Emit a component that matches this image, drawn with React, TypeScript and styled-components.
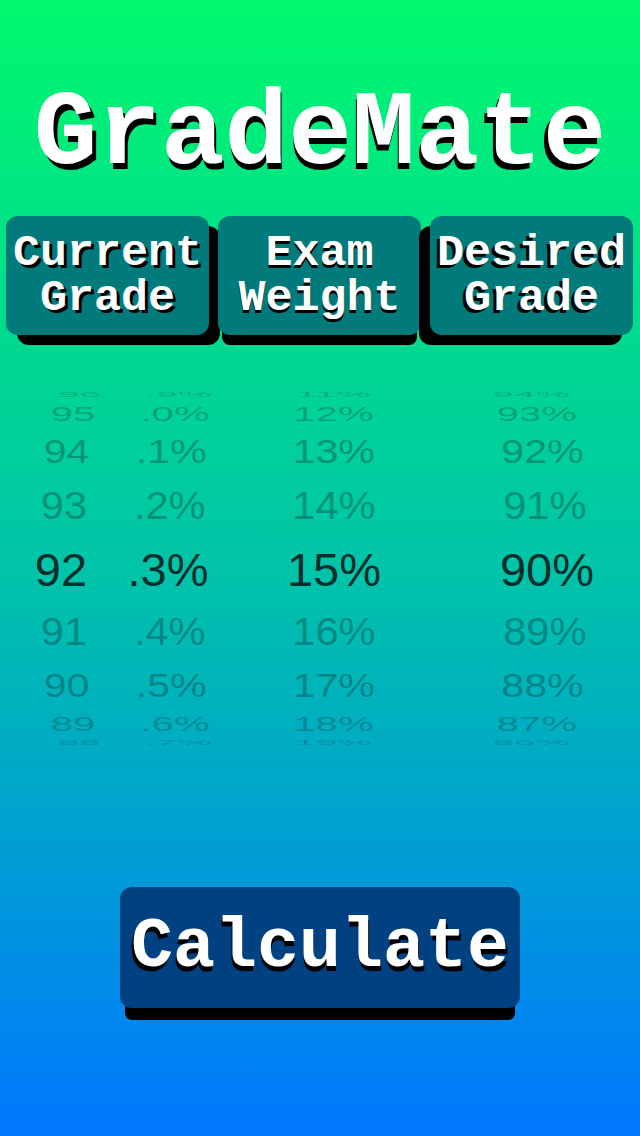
import React from "react";
import styled, { createGlobalStyle } from "styled-components";

const GlobalStyle = createGlobalStyle`
  html, body {
    margin: 0;
    padding: 0;
  }
  body {
    background: #00f56e;
  }
`;

const Page = styled.div`
  width: 640px;
  height: 1136px;
  overflow: hidden;
  display: flex;
  flex-direction: column;
  align-items: stretch;
  background: linear-gradient(to bottom, #00f86d 0%, #00c4a8 50%, #0077ff 100%);
  font-family: "Liberation Mono", "Courier New", monospace;
`;

const Title = styled.h1`
  margin: 82px 0 0;
  height: 106px;
  font-size: 106px;
  line-height: 1;
  font-weight: 700;
  color: #ffffff;
  text-align: center;
  white-space: nowrap;
`;

const TitleLetter = styled.span<{ $dx: number }>`
  text-shadow: ${(p) => p.$dx}px 6px 0 #000;
`;

const HeaderRow = styled.div`
  margin-top: 28px;
  display: flex;
  gap: 9px;
  padding: 0 7px 0 6px;
`;

const HeaderCard = styled.div<{ $shadow: string }>`
  width: 203px;
  height: 119px;
  border-radius: 12px;
  background: #007a7a;
  box-shadow: ${(p) => p.$shadow};
  display: flex;
  align-items: center;
  justify-content: center;
`;

const CardLabel = styled.div<{ $dx: number }>`
  font-size: 45px;
  line-height: 45px;
  font-weight: 700;
  color: #ffffff;
  text-align: center;
  text-shadow: ${(p) => p.$dx}px 3px 0 #000;
  white-space: nowrap;
`;

const Picker = styled.div`
  margin-top: 56px;
  display: flex;
  font-family: "Liberation Sans", Arial, sans-serif;
`;

const Wheel = styled.div<{ $w: number }>`
  width: ${(p) => p.$w}px;
  display: flex;
  flex-direction: column;
`;

const Row = styled.div<{ $h: number }>`
  height: ${(p) => p.$h}px;
  display: flex;
  align-items: center;
  justify-content: center;
  overflow: visible;
`;

const Cell = styled.span<{
  $size: number;
  $color: string;
  $dx: number;
  $sx: number;
  $sy: number;
}>`
  display: block;
  font-size: ${(p) => p.$size}px;
  line-height: 1;
  color: ${(p) => p.$color};
  white-space: nowrap;
  transform: translateX(${(p) => p.$dx}px) scale(${(p) => p.$sx}, ${(p) => p.$sy});
`;

const Spacer = styled.div`
  height: 140px;
`;

const CalcButton = styled.button`
  align-self: center;
  width: 400px;
  height: 121px;
  border: none;
  border-radius: 12px;
  background: #004182;
  box-shadow: 0 17px 0 -5px #000;
  font-family: "Liberation Mono", "Courier New", monospace;
  font-size: 70px;
  font-weight: 700;
  color: #ffffff;
  padding: 0;
  display: flex;
  align-items: center;
  justify-content: center;
`;

const CalcLetter = styled.span<{ $dx: number }>`
  text-shadow: ${(p) => p.$dx}px 5px 0 #000;
`;

// wheel geometry: distance d from selected row
const ROW_H = [64, 62, 46, 30, 8];
const K = [1, 0.99, 0.98, 0.955, 0.93];
const SY = [1, 0.92, 0.77, 0.5, 0.16];
const COLORS = [
  "rgba(5, 30, 32, 0.92)",
  "rgba(0, 40, 40, 0.36)",
  "rgba(0, 40, 40, 0.34)",
  "rgba(0, 40, 40, 0.28)",
  "rgba(0, 40, 40, 0.22)",
];

type Col = { w: number; center: number; values: string[] };

const columns: Col[] = [
  { w: 122, center: 61, values: ["96", "95", "94", "93", "92", "91", "90", "89", "88"] },
  { w: 92, center: 168, values: [".9%", ".0%", ".1%", ".2%", ".3%", ".4%", ".5%", ".6%", ".7%"] },
  { w: 240, center: 334, values: ["11%", "12%", "13%", "14%", "15%", "16%", "17%", "18%", "19%"] },
  { w: 186, center: 547, values: ["94%", "93%", "92%", "91%", "90%", "89%", "88%", "87%", "86%"] },
];

function WheelColumn({ col }: { col: Col }) {
  return (
    <Wheel $w={col.w}>
      {col.values.map((v, i) => {
        const d = Math.abs(i - 4);
        const dx = (320 - col.center) * (1 - K[d]);
        return (
          <Row key={i} $h={ROW_H[d]}>
            <Cell
              $size={d === 0 ? 47 : 42}
              $color={COLORS[d]}
              $dx={dx}
              $sx={K[d]}
              $sy={SY[d]}
            >
              {v}
            </Cell>
          </Row>
        );
      })}
    </Wheel>
  );
}

const TITLE = "GradeMate";
const CALC = "Calculate";

export default function App() {
  return (
    <>
      <GlobalStyle />
      <Page>
        <Title>
          {TITLE.split("").map((ch, i) => (
            <TitleLetter key={i} $dx={Math.round(-(i - 4) * 1)}>
              {ch}
            </TitleLetter>
          ))}
        </Title>
        <HeaderRow>
          <HeaderCard $shadow="11px 10px 0 0 #000">
            <CardLabel $dx={3}>
              Current
              <br />
              Grade
            </CardLabel>
          </HeaderCard>
          <HeaderCard $shadow="0 14px 0 -4px #000">
            <CardLabel $dx={0}>
              Exam
              <br />
              Weight
            </CardLabel>
          </HeaderCard>
          <HeaderCard $shadow="-11px 10px 0 0 #000">
            <CardLabel $dx={-3}>
              Desired
              <br />
              Grade
            </CardLabel>
          </HeaderCard>
        </HeaderRow>
        <Picker>
          {columns.map((c, i) => (
            <WheelColumn key={i} col={c} />
          ))}
        </Picker>
        <Spacer />
        <CalcButton>
          {CALC.split("").map((ch, i) => (
            <CalcLetter key={i} $dx={Math.round((i - 4) * 0.5)}>
              {ch}
            </CalcLetter>
          ))}
        </CalcButton>
      </Page>
    </>
  );
}
